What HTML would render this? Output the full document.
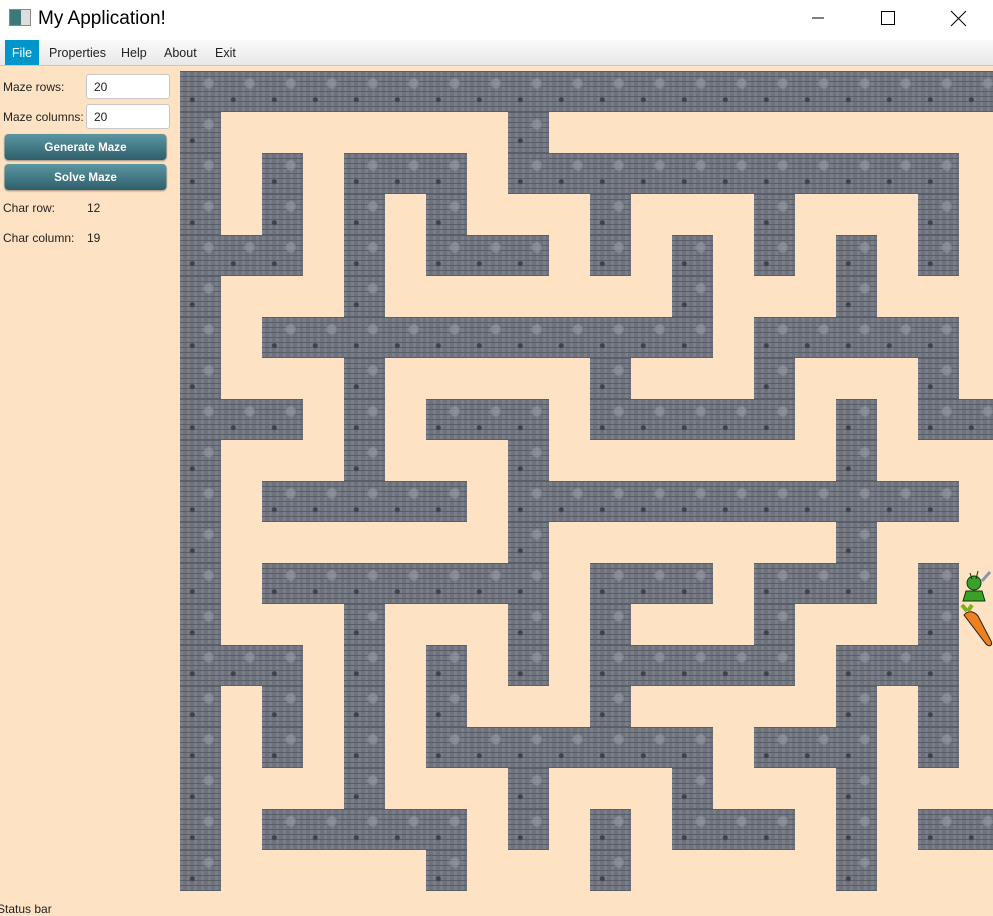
<!DOCTYPE html>
<html><head><meta charset="utf-8"><style>
*{margin:0;padding:0;box-sizing:border-box}
body{width:993px;height:906px;overflow:hidden;background:#fde3c3;font-family:"Liberation Sans",sans-serif;position:relative}
#title{position:absolute;left:0;top:0;width:993px;height:40px;background:#fff}
#title .t{position:absolute;left:38px;top:8px;font-size:19px;color:#000}
#icon{position:absolute;left:9px;top:9px;width:22px;height:17px;border:1px solid #888;background:linear-gradient(90deg,#3a7a7a 0 55%,#ddd 55%)}
#menu{position:absolute;left:0;top:40px;width:993px;height:26px;background:linear-gradient(#fafafa,#e8e8e8);border-bottom:1px solid #c8c8c8;font-size:12.5px}
#menu span{position:absolute;top:0;height:25px;line-height:26px;color:#222}
.win{position:absolute;top:0;width:46px;height:36px}
.lbl{position:absolute;font-size:12px;color:#222}
.inp{position:absolute;left:86px;width:84px;height:25px;background:#fff;border:1px solid #c8c8c8;border-radius:3px;font-size:12px;padding:5px 7px;color:#222}
.btn{position:absolute;left:2px;width:167px;height:26px;border-radius:4px;background:linear-gradient(#5b96a3,#2f5f6b);color:#fff;font-weight:bold;font-size:12px;text-align:center;line-height:26px;box-shadow:0 1px 2px rgba(0,0,0,.4);transform:scaleX(.97)}
.w{position:absolute;width:41px;height:41px;background-color:#6e727c;
background-image:radial-gradient(circle at 30% 70%,#3f424a 0 2px,transparent 3px),radial-gradient(circle at 70% 30%,rgba(160,165,175,.5) 0 4px,transparent 6px),repeating-linear-gradient(0deg,#5a5e67 0 1px,transparent 1px 5px),repeating-linear-gradient(90deg,rgba(150,155,165,.3) 0 3px,transparent 3px 7px)}
</style></head><body>
<div id="title"><div id="icon"></div><div class="t">My Application!</div>
<svg class="win" style="left:795px" viewBox="0 0 46 36"><line x1="17" y1="18" x2="29" y2="18" stroke="#000"/></svg>
<svg class="win" style="left:864px" viewBox="0 0 46 36"><rect x="17.5" y="11.5" width="13" height="13" fill="none" stroke="#000"/></svg>
<svg class="win" style="left:935px" viewBox="0 0 46 36"><path d="M16 11L31 26M31 11L16 26" stroke="#000"/></svg>
</div>
<div id="menu">
<span style="left:5px;width:34px;background:#0096c9;color:#fff;text-align:center">File</span>
<span style="left:49px">Properties</span><span style="left:121px">Help</span><span style="left:164px">About</span><span style="left:215px">Exit</span>
</div>
<div class="lbl" style="left:3px;top:80px">Maze rows:</div>
<div class="inp" style="top:74px">20</div>
<div class="lbl" style="left:3px;top:110px">Maze columns:</div>
<div class="inp" style="top:104px">20</div>
<div class="btn" style="top:134px">Generate Maze</div>
<div class="btn" style="top:164px">Solve Maze</div>
<div class="lbl" style="left:3px;top:201px">Char row:</div><div class="lbl" style="left:87px;top:201px">12</div>
<div class="lbl" style="left:3px;top:231px">Char column:</div><div class="lbl" style="left:87px;top:231px">19</div>
<div class="lbl" style="left:-3px;top:902px">Status bar</div>
<div id="maze"></div>
<svg style="position:absolute;left:958px;top:565px" width="35" height="85" viewBox="0 0 35 85">
<g fill="#3aa02a" stroke="#0a3a0a" stroke-width="1"><circle cx="16" cy="18" r="7"/><path d="M8 26h16l3 10H5z"/><path d="M12 8l2 6M20 6l-2 8"/></g>
<path d="M24 16l8-9" stroke="#8898a8" stroke-width="3"/>
<path d="M6 50c4-5 10-4 14 1l13 25c2 5-2 6-5 3z" fill="#f0801e" stroke="#222"/>
<path d="M9 46l-5-6M10 46l4-6" stroke="#7ab020" stroke-width="4"/>
</svg>
<script>
var R=["0-19","0,8","0,2,4-6,8-18","0,2,4,6,10,14,18","0-2,4,6-8,10,12,14,16,18","0,4,12,16","0,2-12,14-18","0,4,10,14,18","0-2,4,6-8,10-14,16,18,19","0,4,8,16","0,2-6,8-18","0,8,16","0,2-8,10-12,14-16,18","0,4,8,10,14,18","0-2,4,6,8,10-14,16-18","0,2,4,6,10,16,18","0,2,4,6-12,14-16,18","0,4,8,12,16","0,2-6,8,10,12-14,16,18,19","0,6,10,16"];
var h="";R.forEach(function(s,r){s.split(",").forEach(function(p){var a=p.split("-"),x=+a[0],y=a.length>1?+a[1]:x;for(var c=x;c<=y;c++)h+='<div class="w" style="left:'+(180+41*c)+'px;top:'+(71+41*r)+'px"></div>';});});
document.getElementById("maze").innerHTML=h;
</script>
</body></html>
